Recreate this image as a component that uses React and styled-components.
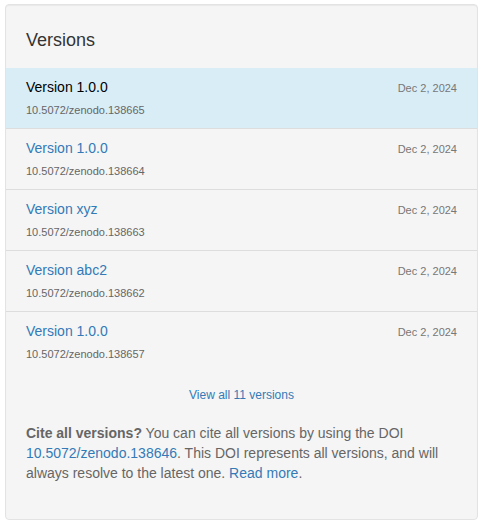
import React from 'react'
import styled, { createGlobalStyle } from 'styled-components'

const GlobalStyle = createGlobalStyle`
  body {
    margin: 0;
    background: #fff;
    font-family: "Liberation Sans", Arial, sans-serif;
    color: #333;
  }
`

const Page = styled.div`
  padding: 4px 0 0 5px;
`

const Well = styled.div`
  box-sizing: border-box;
  width: 473px;
  height: 516px;
  background: #f5f5f5;
  border: 1px solid #e3e3e3;
  border-radius: 4px;
  box-shadow: inset 0 1px 1px rgba(0, 0, 0, 0.05);
  display: flex;
  flex-direction: column;
`

const Heading = styled.h4`
  margin: 0;
  padding: 25px 20px 18px;
  font-size: 18px;
  font-weight: 400;
  line-height: 20px;
  color: #333;
`

const List = styled.div`
  display: flex;
  flex-direction: column;
`

const Item = styled.div`
  padding: 9px 20px 10px;
  background: ${p => (p.$active ? '#d9edf7' : 'transparent')};
  border-bottom: ${p => (p.$last ? 'none' : '1px solid #ddd')};
`

const TopRow = styled.div`
  display: flex;
  justify-content: space-between;
  align-items: baseline;
`

const Title = styled.a`
  font-size: 14px;
  line-height: 20px;
  color: ${p => (p.$active ? '#000' : '#337ab7')};
  text-decoration: none;
`

const Date = styled.span`
  font-size: 11px;
  color: #777;
`

const Doi = styled.div`
  margin-top: 5px;
  font-size: 11px;
  line-height: 16px;
  color: #666;
`

const ViewAll = styled.a`
  display: block;
  margin-top: 15px;
  text-align: center;
  font-size: 12px;
  line-height: 17px;
  color: #337ab7;
  text-decoration: none;
`

const Cite = styled.p`
  margin: 19px 0 0;
  padding: 0 20px;
  font-size: 14px;
  line-height: 20px;
  color: #666;

  strong {
    font-weight: 700;
  }
`

const Link = styled.a`
  color: #337ab7;
  text-decoration: none;
`

const versions = [
  { title: 'Version 1.0.0', doi: '10.5072/zenodo.138665', date: 'Dec 2, 2024', active: true },
  { title: 'Version 1.0.0', doi: '10.5072/zenodo.138664', date: 'Dec 2, 2024' },
  { title: 'Version xyz', doi: '10.5072/zenodo.138663', date: 'Dec 2, 2024' },
  { title: 'Version abc2', doi: '10.5072/zenodo.138662', date: 'Dec 2, 2024' },
  { title: 'Version 1.0.0', doi: '10.5072/zenodo.138657', date: 'Dec 2, 2024' },
]

export default function App() {
  return (
    <Page>
      <GlobalStyle />
      <Well>
        <Heading>Versions</Heading>
        <List>
          {versions.map((v, i) => (
            <Item key={v.doi} $active={v.active} $last={i === versions.length - 1}>
              <TopRow>
                <Title $active={v.active}>{v.title}</Title>
                <Date>{v.date}</Date>
              </TopRow>
              <Doi>{v.doi}</Doi>
            </Item>
          ))}
        </List>
        <ViewAll>View all 11 versions</ViewAll>
        <Cite>
          <strong>Cite all versions?</strong> You can cite all versions by using the DOI{' '}
          <Link>10.5072/zenodo.138646</Link>. This DOI represents all versions, and will
          always resolve to the latest one. <Link>Read more</Link>.
        </Cite>
      </Well>
    </Page>
  )
}
